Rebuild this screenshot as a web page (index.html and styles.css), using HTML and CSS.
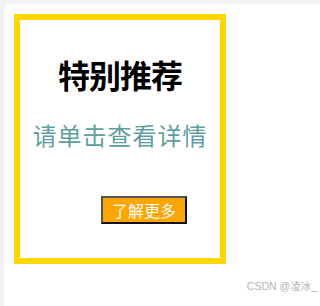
FILE: index.html
```html
<!DOCTYPE html>
<html lang="zh">
<head>
<meta charset="utf-8">
<link rel="stylesheet" href="styles.css">
</head>
<body>
<div class="card">
  <div class="promo">
    <h1 class="title">特别推荐</h1>
    <p class="subtitle">请单击查看详情</p>
    <button class="more">了解更多</button>
  </div>
  <div class="watermark">CSDN @凌冰_</div>
</div>
</body>
</html>
```
FILE: styles.css
```css
html, body {
  margin: 0;
  padding: 0;
  height: 100%;
}
body {
  background: #f2f2f2;
  font-family: "Noto Sans CJK SC", "Noto Sans", sans-serif;
  padding: 4px 0 0 4px;
  box-sizing: border-box;
}
.card {
  background: #ffffff;
  border-radius: 8px 0 0 0;
  height: 100%;
  padding: 10px;
  box-sizing: border-box;
  display: flex;
  flex-direction: column;
}
.promo {
  width: 200px;
  height: 238px;
  border: 6px solid #ffd700;
  display: flex;
  flex-direction: column;
}
.title {
  margin: 38px 0 0 0;
  font-size: 32px;
  line-height: 32px;
  font-weight: bold;
  color: #000;
  text-align: center;
  letter-spacing: -1px;
}
.subtitle {
  margin: 33px 0 0 0;
  font-size: 24px;
  line-height: 24px;
  color: #5f9ea0;
  text-align: center;
  letter-spacing: 1px;
}
.more {
  align-self: flex-start;
  margin: 49px 0 0 81px;
  width: 86px;
  height: 28px;
  padding: 0;
  background: #ffa500;
  color: #fff;
  font-family: "Noto Sans CJK SC", sans-serif;
  font-size: 16px;
  line-height: 24px;
  border: 2px solid;
  border-color: #555 #111 #111 #555;
}
.watermark {
  margin-top: auto;
  align-self: flex-end;
  font-family: "Liberation Sans", "Noto Sans CJK SC", sans-serif;
  font-size: 10.5px;
  color: #b4b4b4;
  margin-right: -7px;
  line-height: 12px;
  position: relative;
  top: -4px;
}
```
